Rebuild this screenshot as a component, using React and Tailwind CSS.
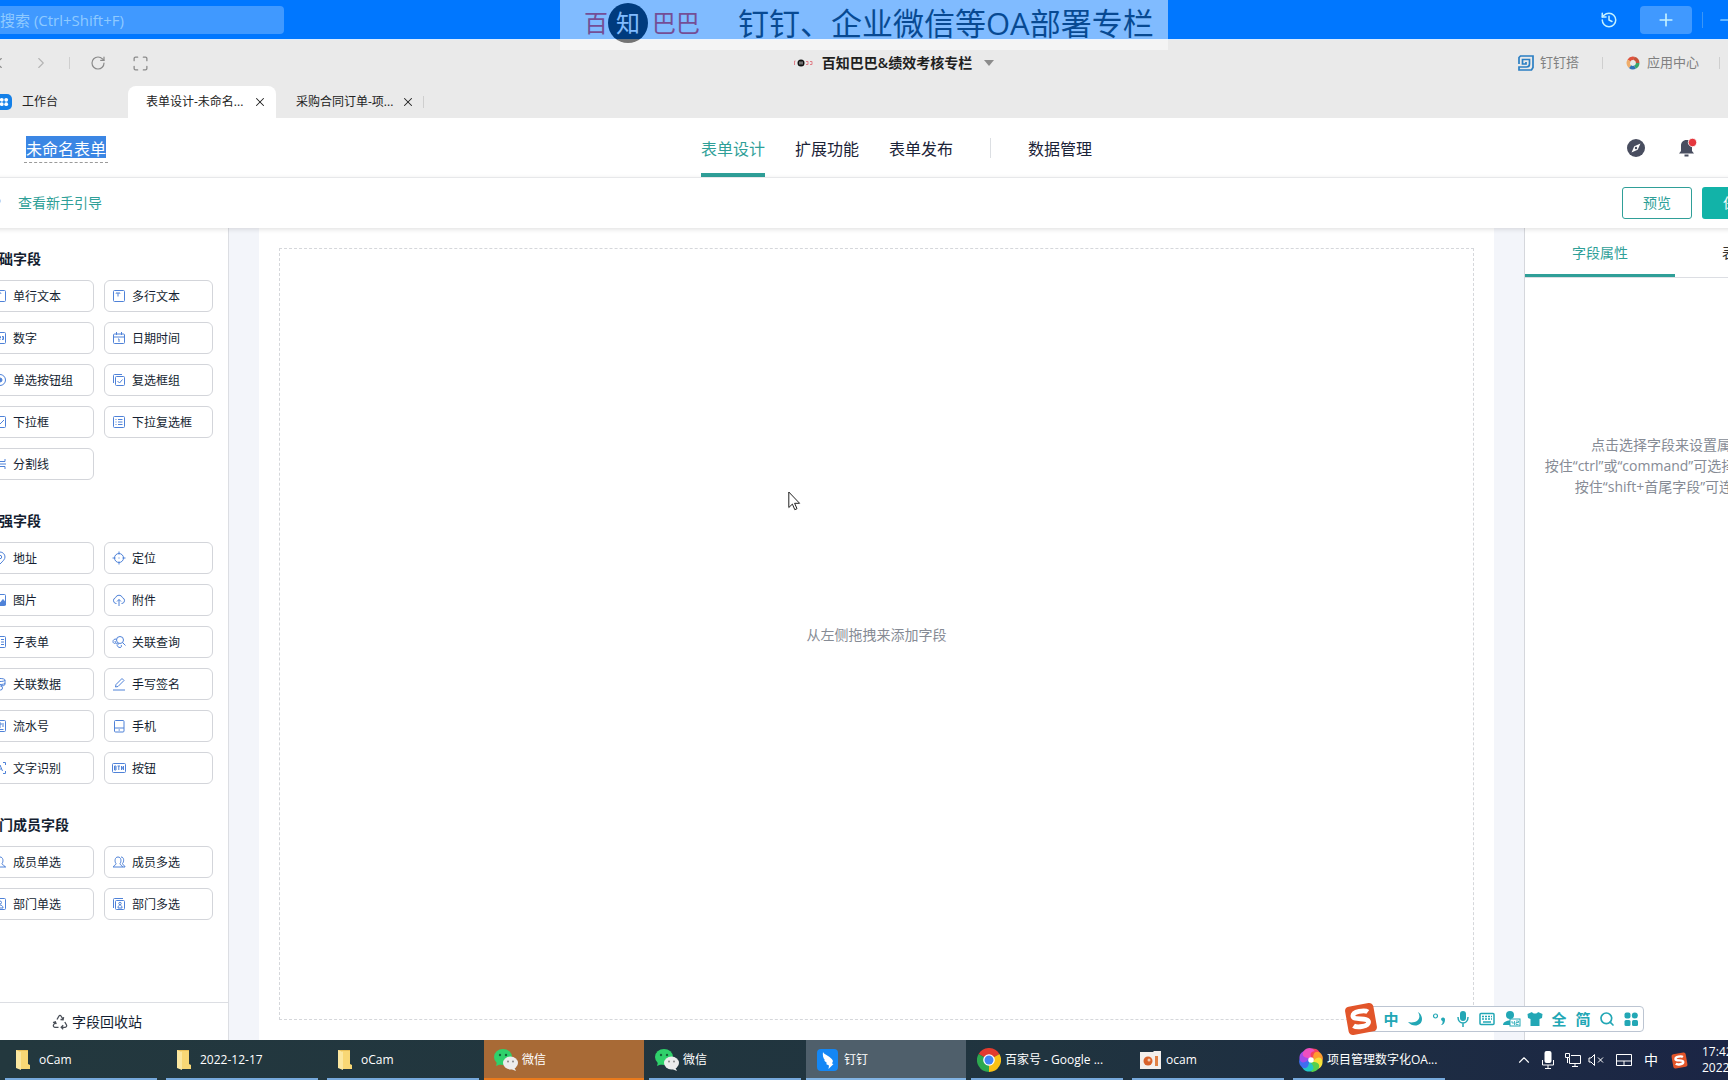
import { useState } from "react"
import {
  ChevronLeft,
  ChevronRight,
  ChevronUp,
  History,
  Maximize,
  Minus,
  Plus,
  RotateCw,
  Search,
  X,
} from "lucide-react"

const FIELD_ICONS = {
  text: (
    <>
      <rect x="1.5" y="1.5" width="11" height="11" rx="1" />
      <path d="M4 4.5V4h4v.5M6 4v3.5" />
    </>
  ),
  number: (
    <>
      <rect x="1.5" y="1.5" width="11" height="11" rx="1" />
      <path d="M4 5.5v3M6 5.5h1.5v1.5H6v1.5h1.5M9 5.5h1.5v3H9M9 7h1.5" />
    </>
  ),
  date: (
    <>
      <rect x="1.5" y="3" width="11" height="9.5" rx="1" />
      <path d="M1.5 6h11M4.5 1v3M9.5 1v3M6 8h1v3" />
    </>
  ),
  radio: (
    <>
      <circle cx="7" cy="7" r="5.5" />
      <circle cx="7" cy="7" r="2" fill="currentColor" />
    </>
  ),
  checkGroup: (
    <>
      <path d="M1.5 10V2.5a1 1 0 0 1 1-1H10" />
      <rect x="3.5" y="3.5" width="9" height="9" rx="1" />
      <path d="M5.5 8 7.5 10l3-3.5" />
    </>
  ),
  select: (
    <>
      <rect x="1.5" y="1.5" width="11" height="11" rx="1" />
      <path d="M4.5 6.5 7 9l4-4" />
    </>
  ),
  selectMulti: (
    <>
      <rect x="1.5" y="1.5" width="11" height="11" rx="1" />
      <path d="M3.5 4.5h1M6 4.5h4.5M3.5 7h1M6 7h4.5M3.5 9.5h1M6 9.5h4.5" />
    </>
  ),
  divider: <path d="M2 2v2.5h10V2M1 7h12M2 12V9.5h10V12" />,
  address: (
    <>
      <path d="M7 13C4 10 2 8.2 2 6a5 5 0 0 1 10 0c0 2.2-2 4-5 7Z" />
      <circle cx="7" cy="6" r="1.7" />
    </>
  ),
  locate: (
    <>
      <circle cx="7" cy="7" r="4.5" />
      <path d="M7 .5v3M7 10.5v3M.5 7h3M10.5 7h3M6.5 7h1" />
    </>
  ),
  image: (
    <>
      <rect x="1.5" y="1.5" width="11" height="11" rx="1" />
      <path d="m2 11 3-4 2.5 2.5L10 6.5l2.5 3V12H2Z" fill="currentColor" />
    </>
  ),
  attachment: (
    <path d="M4.5 10.5H4A3 3 0 0 1 3.5 4.7a3.7 3.7 0 0 1 7 0A3 3 0 0 1 10 10.5h-.5M7 13V6.5M5 8.5l2-2 2 2" />
  ),
  subform: (
    <>
      <rect x="1.5" y="1.5" width="11" height="11" rx="1" />
      <path d="M5.5 1.5v11M8 4.5h3M8 7h3M8 9.5h3" />
    </>
  ),
  linkQuery: (
    <>
      <circle cx="8" cy="5" r="3.5" />
      <path d="m10.5 7.5 3 3M4.5 4c-2.5 0-3.5 1-3.5 2.5S2 8.5 3.5 8.5M3 6c0 2 2 3 4 3M5 9.5c0 2 1.5 3 3 3s2-1.5 1-2.5" />
    </>
  ),
  linkData: (
    <>
      <path d="M2 3c0-2 10-2 10 0v4c0 2-3 2-4 1.5M2 3v6c0 1 1.5 1.500 3 1.500M2 3c0 2 10 2 10 0M2 6c0 2 10 2 10 0" />
      <circle cx="7.5" cy="11" r="2" />
    </>
  ),
  signature: <path d="M1 13h12M3.500 10l.5-2.500L10 1.500l2 2L6 9.500Z" />,
  serial: (
    <>
      <rect x="1.5" y="1.5" width="11" height="11" rx="1" />
      <path d="M3.5 10.5h7M4 4v4M6.500 4H8v2H6.500v2H8M10 4v4" />
    </>
  ),
  phone: (
    <>
      <rect x="2.5" y="1.5" width="9.5" height="11.5" rx="1" />
      <path d="M2.5 9H12M6.500 11H8" />
    </>
  ),
  ocr: (
    <path d="M1.5 4V1.5H4M10 1.5h2.5V4M12.5 10v2.5H10M4 12.5H1.5V10M4.500 10 7 4l2.500 6M5.500 8h3" />
  ),
  button: (
    <>
      <rect x="0.5" y="2.5" width="13" height="9" rx="1" />
      <path d="M2.500 5v4H4V5Zm0 2H4M5.500 5H8M6.800 5v4M9.500 9V5l2 4V5" />
    </>
  ),
  member: (
    <path d="M1 12h12M2 12c0-2 3-1.500 3-3.500C3.500 7 3.500 2 7 2s3.500 5 2 6.500c0 2 3 1.500 3 3.500" />
  ),
  members: (
    <path d="M1 12h10M1.500 12c0-2 2.500-1.500 2.500-3.500C2.500 7 2.500 2 6 2s3.500 5 2 6.500c0 2 2.500 1.500 2.500 3.500M9 2c3.500 0 3 5 1.500 6.500 0 2 2.500 1.500 2.500 3.500h-2" />
  ),
  dept: (
    <>
      <rect x="1.5" y="1.5" width="11" height="11" rx="1" />
      <circle cx="7" cy="5.5" r="1.5" />
      <path d="M4 11c0-4 6-4 6 0Z" />
    </>
  ),
  depts: (
    <>
      <path d="M1.5 11V2.5a1 1 0 0 1 1-1H11" />
      <rect x="3.5" y="3.5" width="9" height="9" rx="1" />
      <circle cx="8" cy="6.5" r="1.2" />
      <path d="M6 11c0-4 4-4 4 0Z" />
    </>
  ),
}

const FIELD_SECTIONS = [
  {
    title: "基础字段",
    fields: [
      { label: "单行文本", icon: "text" },
      { label: "多行文本", icon: "text" },
      { label: "数字", icon: "number" },
      { label: "日期时间", icon: "date" },
      { label: "单选按钮组", icon: "radio" },
      { label: "复选框组", icon: "checkGroup" },
      { label: "下拉框", icon: "select" },
      { label: "下拉复选框", icon: "selectMulti" },
      { label: "分割线", icon: "divider" },
    ],
  },
  {
    title: "增强字段",
    fields: [
      { label: "地址", icon: "address" },
      { label: "定位", icon: "locate" },
      { label: "图片", icon: "image" },
      { label: "附件", icon: "attachment" },
      { label: "子表单", icon: "subform" },
      { label: "关联查询", icon: "linkQuery" },
      { label: "关联数据", icon: "linkData" },
      { label: "手写签名", icon: "signature" },
      { label: "流水号", icon: "serial" },
      { label: "手机", icon: "phone" },
      { label: "文字识别", icon: "ocr" },
      { label: "按钮", icon: "button" },
    ],
  },
  {
    title: "部门成员字段",
    fields: [
      { label: "成员单选", icon: "member" },
      { label: "成员多选", icon: "members" },
      { label: "部门单选", icon: "dept" },
      { label: "部门多选", icon: "depts" },
    ],
  },
]

const FolderIcon = () => (
  <svg viewBox="0 0 24 24" className="h-6 w-6">
    <path d="M5 2h12v15h2v3H5Z" fill="#e9bf57" />
    <path d="M9 3h8v13l2 1v4H9Z" fill="#f8d775" />
    <path d="M5 2l5 2v18l-5-2Z" fill="#fbe7a0" />
  </svg>
)

const WechatIcon = () => (
  <svg viewBox="0 0 24 24" className="h-6 w-6">
    <ellipse cx="9" cy="9" rx="9" ry="8" fill="#2fd16b" />
    <path d="m3 14-1 4 5-2Z" fill="#2fd16b" />
    <circle cx="6" cy="7" r="1.2" fill="#14653a" />
    <circle cx="12" cy="7" r="1.2" fill="#14653a" />
    <ellipse cx="16.5" cy="15" rx="7.5" ry="6.5" fill="#ececec" />
    <path d="m20 19 2 4-5-2Z" fill="#ececec" />
    <circle cx="14" cy="13.5" r="1" fill="#888" />
    <circle cx="19" cy="13.5" r="1" fill="#888" />
  </svg>
)

const DingIcon = () => (
  <svg viewBox="0 0 24 24" className="h-6 w-6">
    <rect x="1" y="1" width="21" height="22" rx="4" fill="#1487f5" />
    <path
      d="M7 4c1 3 8 4 10 9l-1 2.500 1.500.5-5 5 .5-3.500-3-1.500 1-1-3-2.500 1-.3C7 10 6.500 7 7 4Z"
      fill="#fff"
    />
  </svg>
)

const ChromeIcon = () => (
  <svg viewBox="0 0 24 24" className="h-6 w-6">
    <path d="M12 12 1.600 6A12 12 0 0 1 22.400 6Z" fill="#e33b2e" />
    <path d="M12 12 22.400 6A12 12 0 0 1 12 24Z" fill="#fbc116" />
    <path d="M12 12 12 24A12 12 0 0 1 1.600 6Z" fill="#2da94f" />
    <circle cx="12" cy="12" r="5.8" fill="#fff" />
    <circle cx="12" cy="12" r="4.5" fill="#4285f4" />
  </svg>
)

const OcamIcon = () => (
  <svg viewBox="0 0 24 24" className="h-6 w-6">
    <path d="M2 4h13l1-1h7v18H2Z" fill="#f3efec" />
    <circle cx="10" cy="13" r="4.5" fill="#d9622b" />
    <circle cx="11" cy="12" r="1.5" fill="#f3c9b0" />
    <rect x="17" y="8" width="3" height="10" fill="#e08145" />
  </svg>
)

const PETALS = [
  "#f5445c",
  "#ff9b2f",
  "#f6e13a",
  "#57d04a",
  "#22c7c7",
  "#3f6df0",
  "#a14be8",
  "#ee4fc0",
]

const PinwheelIcon = () => (
  <svg viewBox="0 0 24 24" className="h-6 w-6">
    {PETALS.map((color, i) => (
      <path
        key={color}
        d="M12 9C9 6 8 2 13 .5c5-.5 9 3 8 8C19 6 15 6 14 11Z"
        fill={color}
        transform={`rotate(${i * 45} 12 12)`}
      />
    ))}
    <circle cx="12" cy="12" r="2.8" fill="#fff" />
  </svg>
)

const SogouIcon = ({ className }) => (
  <svg viewBox="0 0 32 32" className={className}>
    <g transform="rotate(-10 16 16)">
      <rect x="2.5" y="2.5" width="27" height="27" rx="4" fill="#e2552a" />
      <path
        d="M23.500 10.500C21 8 9.500 7.500 9 12c-.5 4.500 14 3 13.500 8-.5 4-11.500 4-14.500 1"
        fill="none"
        stroke="#fff"
        strokeWidth="4.5"
      />
    </g>
  </svg>
)

const RecycleIcon = () => (
  <svg
    viewBox="0 0 16 16"
    className="h-4 w-4"
    fill="none"
    stroke="#4a4f58"
    strokeWidth="1.3"
  >
    <path d="M5 5.500 7 2c.5-.8 1.500-.8 2 0l1.800 3M8.500 5.500l2.600.2.500-2.600" />
    <path d="m12.800 8 1.700 3c.5 1-.2 2.300-1.300 2.300H9.500M11.200 11.300l-2 2 2 2" />
    <path d="M6.500 13.300H2.800c-1.100 0-1.800-1.300-1.300-2.300l1.800-3M1 8.500l2.400-.8.8 2.400" />
  </svg>
)

const TASKS = [
  { label: "oCam", Icon: FolderIcon },
  { label: "2022-12-17", Icon: FolderIcon },
  { label: "oCam", Icon: FolderIcon },
  { label: "微信", Icon: WechatIcon, state: "alert" },
  { label: "微信", Icon: WechatIcon },
  { label: "钉钉", Icon: DingIcon, state: "active" },
  { label: "百家号 - Google ...", Icon: ChromeIcon },
  { label: "ocam", Icon: OcamIcon },
  { label: "项目管理数字化OA...", Icon: PinwheelIcon },
]

const TitleBar = () => (
  <div className="flex h-10 shrink-0 items-center border-b border-[#dcecff] bg-[#0077ff]">
    <input
      type="search"
      aria-label="搜索"
      placeholder="搜索 (Ctrl+Shift+F)"
      className="h-7 w-[314px] rounded bg-[#4099ff] pl-[30px] text-[15px] text-white placeholder:text-[#8fcaff]"
    />
    <div className="ml-auto flex items-center pr-[90px] text-[#c4f1ff]">
      <button aria-label="历史" className="mr-[22px]">
        <History size={18} strokeWidth={2} />
      </button>
      <button
        aria-label="新建"
        className="flex h-7 w-[52px] items-center justify-center rounded bg-[#4099ff]"
      >
        <Plus size={20} />
      </button>
      <span className="ml-[10px] h-4 w-px bg-[#3c96f5]" />
      <button aria-label="最小化" className="ml-[14px]">
        <Minus size={18} strokeWidth={1.5} />
      </button>
    </div>
  </div>
)

const NavBar = () => (
  <div className="grid h-[46px] shrink-0 grid-cols-[1fr_auto_1fr] items-center">
    <div className="flex items-center pl-5 text-[#8a8a8a]">
      <button aria-label="后退">
        <ChevronLeft size={18} strokeWidth={1.5} />
      </button>
      <button aria-label="前进" className="ml-6 text-[#b4b4b4]">
        <ChevronRight size={18} strokeWidth={1.5} />
      </button>
      <span className="ml-[19px] h-3 w-px bg-[#cfcfcf]" />
      <button aria-label="刷新" className="ml-5">
        <RotateCw size={16} strokeWidth={1.8} />
      </button>
      <button aria-label="全屏" className="ml-[26px]">
        <Maximize size={17} strokeWidth={1.8} />
      </button>
    </div>
    <button className="flex items-center pr-2 text-sm font-semibold text-[#1f1f1f]">
      <svg viewBox="0 0 20 10" className="mr-[9px] h-[10px] w-5">
        <circle cx="8" cy="5" r="3.5" fill="#111" />
        <path d="M7 3.500v3M9 3.500v3" stroke="#fff" strokeWidth="0.8" />
        <path
          d="M2.500 3h-1v4M13 3.500h2v3h-2M17 3.500h2v3h-2"
          fill="none"
          stroke="#e07f88"
        />
      </svg>
      百知巴巴&绩效考核专栏
      <svg viewBox="0 0 10 6" className="ml-3 h-[6px] w-[10px]">
        <path d="M0 0h10L5 6Z" fill="#8c8c8c" />
      </svg>
    </button>
    <div className="flex items-center justify-end pr-[105px] text-[13px] text-[#808080]">
      <button className="flex items-center gap-[6px]">
        <svg
          viewBox="0 0 16 16"
          className="h-4 w-4"
          fill="none"
          stroke="#2b7fc3"
          strokeWidth="1.7"
        >
          <path d="M1 9V2.500L2.500 1H15v11.500L13.500 15H1v-3h7.500c2 0 3-1.500 3-3V4.500H4.500V9H8V7" />
        </svg>
        钉钉搭
      </button>
      <span className="mx-[23px] h-3 w-px bg-[#cfcfcf]" />
      <button className="flex items-center gap-[7px]">
        <svg
          viewBox="0 0 14 14"
          className="h-[14px] w-[14px]"
          fill="none"
          strokeWidth="3.5"
        >
          <path d="M3 4.500A4.700 4.700 0 0 1 8 2.400" stroke="#e0533d" />
          <path d="M8 2.400A4.700 4.700 0 0 1 11.700 7" stroke="#c4543a" />
          <path d="M11.700 7A4.700 4.700 0 0 1 9 11.200" stroke="#3aa66b" />
          <path d="M9 11.200A4.700 4.700 0 0 1 4 10.600" stroke="#2f74b8" />
          <path d="M4 10.600A4.700 4.700 0 0 1 3 4.500" stroke="#efad6a" />
        </svg>
        应用中心
      </button>
      <span className="ml-5 h-3 w-px bg-[#cfcfcf]" />
    </div>
  </div>
)

const PageTabs = () => (
  <div className="flex h-8 shrink-0 items-center text-xs text-[#222]">
    <button className="flex w-[158px] items-center gap-[10px] pl-[26px]">
      <svg viewBox="0 0 16 16" className="h-4 w-4">
        <rect width="16" height="16" rx="5" fill="#1480e8" />
        <g fill="#fff">
          <circle cx="5.8" cy="5.8" r="1.9" />
          <circle cx="10.2" cy="5.8" r="1.9" />
          <circle cx="5.8" cy="10.2" r="1.9" />
          <circle cx="10.2" cy="10.2" r="1.9" />
        </g>
      </svg>
      工作台
    </button>
    <div className="flex h-8 w-[148px] items-center justify-between rounded-t-lg bg-white pr-[9px] pl-[18px]">
      <button>表单设计-未命名...</button>
      <button aria-label="关闭标签">
        <X size={14} strokeWidth={1.8} />
      </button>
    </div>
    <div className="ml-5 flex items-center gap-2">
      <button>采购合同订单-项...</button>
      <button aria-label="关闭标签">
        <X size={14} strokeWidth={1.8} />
      </button>
    </div>
    <span className="ml-2 h-3 w-px bg-[#cfcfcf]" />
  </div>
)

const NAV_TABS = ["表单设计", "扩展功能", "表单发布"]

const FormHeader = () => {
  const [formName, setFormName] = useState("未命名表单")
  const [activeTab, setActiveTab] = useState(NAV_TABS[0])

  return (
    <div className="grid h-[60px] shrink-0 grid-cols-[1fr_auto_1fr] items-center border-b border-[#f1f2f4] bg-white">
      <div className="pl-[54px]">
        <div className="inline-block border-b border-dashed border-[#9a9a9a] px-[2px] pt-1 pb-1">
          <input
            aria-label="表单名称"
            value={formName}
            onChange={(event) => setFormName(event.target.value)}
            className="block h-[22px] w-20 bg-[#3b86e4] pt-px text-base leading-[21px] text-white"
          />
        </div>
      </div>
      <nav className="flex h-[59px] pr-[2px] text-base text-[#1b2338]">
        <div className="flex gap-[30px]">
          {NAV_TABS.map((tab) => (
            <button
              key={tab}
              onClick={() => setActiveTab(tab)}
              className={
                tab === activeTab
                  ? "border-b-4 border-[#2f9f98] pt-[6px] text-[#2f9f98]"
                  : "border-b-4 border-transparent pt-[6px]"
              }
            >
              {tab}
            </button>
          ))}
        </div>
        <span className="mx-[37px] h-5 w-px self-center bg-[#dcdfe3]" />
        <button className="pt-[2px]">数据管理</button>
      </nav>
      <div className="flex items-center justify-end pr-[72px]">
        <button aria-label="发现">
          <svg viewBox="0 0 18 18" className="h-[18px] w-[18px]">
            <circle cx="9" cy="9" r="9" fill="#484d5f" />
            <path d="m13.500 4.500-2.800 6.200-6.200 2.800 2.800-6.200Z" fill="#fff" />
            <circle cx="9" cy="9" r="1.2" fill="#484d5f" />
          </svg>
        </button>
        <button aria-label="通知" className="ml-[33px]">
          <svg viewBox="0 0 20 20" className="h-5 w-5">
            <path
              d="M8.500 2c3.500 0 5.500 2.500 5.500 5.500v5.500l2 2.500H1l2-2.500V7.500C3 4.500 5 2 8.500 2ZM6.500 16.500h4v2h-4Z"
              fill="#484d5f"
            />
            <circle
              cx="14.5"
              cy="4.5"
              r="4.2"
              fill="#e5373e"
              stroke="#fff"
              strokeWidth="0.8"
            />
          </svg>
        </button>
        <span className="ml-[31px] h-6 w-6 rounded-full bg-[#b59a3c]" />
      </div>
    </div>
  )
}

const ActionBar = () => (
  <div className="relative z-10 flex h-[50px] shrink-0 items-center justify-between bg-white pr-[53px] shadow-[0_1px_5px_rgba(0,0,0,0.14)]">
    <a
      href="#guide"
      className="flex items-center gap-4 pl-[18px] text-sm text-[#2f9f98]"
    >
      <svg
        viewBox="0 0 14 14"
        className="h-[14px] w-[14px]"
        fill="none"
        stroke="#4a8fe0"
        strokeWidth="1.8"
      >
        <circle cx="7" cy="5" r="4.5" />
      </svg>
      查看新手引导
    </a>
    <div className="flex gap-[10px] text-sm">
      <button className="h-8 w-[70px] rounded-[3px] border border-[#2f9f98] text-[#2f9f98]">
        预览
      </button>
      <button className="h-8 w-[70px] rounded-[3px] bg-[#12b3a8] text-white">
        保存
      </button>
    </div>
  </div>
)

const FieldPanel = () => (
  <aside className="flex w-[259px] shrink-0 flex-col border-r border-[#dcdee3] bg-white">
    <div className="flex min-h-0 flex-1 flex-col gap-[30px] overflow-hidden px-[15px] pt-5">
      {FIELD_SECTIONS.map((section) => (
        <section key={section.title}>
          <h3 className="mb-[10px] text-sm leading-[22px] font-semibold text-[#141e31]">
            {section.title}
          </h3>
          <div className="grid grid-cols-2 gap-[10px]">
            {section.fields.map((field) => (
              <button
                key={field.label}
                className="flex h-8 items-center gap-[6px] rounded-md border border-[#d3d5da] pt-[2px] pl-[7px] text-xs text-[#141e31]"
              >
                <svg
                  viewBox="0 0 14 14"
                  className="mb-[2px] h-[14px] w-[14px] text-[#4f82d8]"
                  fill="none"
                  stroke="currentColor"
                >
                  {FIELD_ICONS[field.icon]}
                </svg>
                {field.label}
              </button>
            ))}
          </div>
        </section>
      ))}
    </div>
    <button className="flex h-[38px] items-center justify-center gap-1 border-t border-[#dcdee3] pr-1 text-sm text-[#141e31]">
      <RecycleIcon />
      字段回收站
    </button>
  </aside>
)

const PropertyPanel = () => (
  <aside className="w-[301px] shrink-0 border-l border-[#d5d7dc] bg-white">
    <div className="flex h-[50px] border-b border-[#dcdee3] text-sm">
      <button className="h-[49px] w-[150px] border-b-[3px] border-[#2f9f98] pt-1 text-[#2f9f98]">
        字段属性
      </button>
      <button className="h-[49px] w-[150px] pt-px text-[#333]">表单属性</button>
    </div>
    <p className="mt-[156px] text-center text-sm leading-[21px] whitespace-nowrap text-[#868b95]">
      点击选择字段来设置属性，
      <br />
      按住“ctrl”或“command”可选择多个字段，
      <br />
      按住“shift+首尾字段”可连续选择
    </p>
  </aside>
)

const Watermark = () => (
  <div className="absolute top-0 left-1/2 z-20 flex h-[50px] w-[608px] -translate-x-1/2 items-center bg-white pb-1 pl-6 opacity-50">
    <span className="text-2xl leading-8 text-[#e8262e]">百</span>
    <span className="flex h-10 w-10 items-center justify-center rounded-full bg-black text-2xl text-white">
      知
    </span>
    <span className="ml-1 text-2xl leading-8 text-[#e8262e]">巴巴</span>
    <span className="ml-[38px] text-[31px] leading-10 whitespace-nowrap text-[#101c28]">
      钉钉、企业微信等OA部署专栏
    </span>
  </div>
)

const ImeBar = () => (
  <div className="absolute right-[84px] bottom-[44px] z-20 flex h-[34px] items-center">
    <SogouIcon className="relative z-10 -mr-[18px] h-[34px] w-[34px]" />
    <div className="flex h-[26px] items-center rounded-sm border border-[#bcc5d2] bg-white pl-[18px] text-[15px] font-bold text-[#22a7b5]">
      <span className="w-6 text-center">中</span>
      <svg viewBox="0 0 24 16" className="h-4 w-6" fill="currentColor">
        <path d="M15 1c4 6-1 12-10 10 5 6 14 4 14-3 0-3-2-6-4-7Z" />
      </svg>
      <svg viewBox="0 0 24 16" className="h-4 w-6" fill="currentColor">
        <circle
          cx="8.5"
          cy="5"
          r="2"
          fill="none"
          stroke="currentColor"
          strokeWidth="1.2"
        />
        <path d="M14 8a2 2 0 1 1 4 1c0 3-2 5-4 5 1-1 2-2 1.500-4A2 2 0 0 1 14 8Z" />
      </svg>
      <svg
        viewBox="0 0 24 16"
        className="h-4 w-6"
        fill="none"
        stroke="currentColor"
        strokeWidth="1.5"
      >
        <rect
          x="9"
          y="0"
          width="6"
          height="10"
          rx="3"
          fill="currentColor"
          stroke="none"
        />
        <path d="M7 6c0 8 10 8 10 0M12 12v4" />
      </svg>
      <svg
        viewBox="0 0 24 16"
        className="h-4 w-6"
        fill="none"
        stroke="currentColor"
        strokeWidth="1.5"
      >
        <rect x="5" y="2.5" width="14" height="11" rx="1" />
        <path d="M7 5.500h10M7 8h10" strokeDasharray="2 1" />
        <path d="M8 11h8" />
      </svg>
      <svg viewBox="0 0 24 16" className="h-4 w-6">
        <circle cx="11" cy="4" r="4" fill="currentColor" />
        <path d="M4 14c0-6 14-6 14 0Z" fill="currentColor" />
        <rect
          x="11"
          y="8"
          width="10"
          height="7"
          fill="#fff"
          stroke="currentColor"
        />
        <path
          d="M13 10v2h2M15.500 10v4M17 10h2.500v1.500H17V13.500h2.500"
          fill="none"
          stroke="currentColor"
          strokeWidth="0.8"
        />
      </svg>
      <svg viewBox="0 0 24 16" className="h-4 w-6" fill="currentColor">
        <path d="M4.500 3 9 1c1 2 5 2 6 0l4.500 2-.5 4-2.500 1v7h-9V8L5 7Z" />
      </svg>
      <span className="w-6 text-center">全</span>
      <span className="w-6 text-center">简</span>
      <span className="flex w-6 justify-center">
        <Search size={16} strokeWidth={2.5} />
      </span>
      <svg viewBox="0 0 24 16" className="h-4 w-6" fill="currentColor">
        <rect x="5.5" y="1.5" width="6" height="6" rx="2" />
        <circle cx="15.8" cy="4.5" r="3" />
        <rect x="5.5" y="9" width="6" height="6" rx="1.5" />
        <rect x="13" y="9" width="6" height="6" rx="1.5" />
      </svg>
    </div>
  </div>
)

const TASK_STATE_CLASSES = {
  alert: "bg-[#a86a36]",
  active: "bg-[#4f5f6b]",
}

const TASK_LINE_CLASSES = {
  alert: "bg-[#ea7a1c]",
  active: "bg-[#82b4e4]",
}

const Taskbar = () => (
  <footer className="flex h-10 shrink-0 gap-px overflow-hidden bg-linear-to-r from-[#23383e] via-[#20343f] via-60% to-[#1b2545] pl-px text-xs text-white">
    {TASKS.map(({ label, Icon, state }, index) => (
      <button
        key={index}
        className={`flex w-40 shrink-0 flex-col ${TASK_STATE_CLASSES[state] ?? ""}`}
      >
        <span className="flex flex-1 items-center gap-1 pt-[2px] pl-[10px] whitespace-nowrap">
          <Icon />
          {label}
        </span>
        <span
          className={`h-[2px] self-stretch ${state ? "" : "mx-1"} ${TASK_LINE_CLASSES[state] ?? "bg-[#76a9dc]"}`}
        />
      </button>
    ))}
    <div className="ml-auto flex shrink-0 items-center">
      <ChevronUp size={18} strokeWidth={1.5} />
      <svg viewBox="0 0 12 18" className="ml-[9px] h-[18px] w-3">
        <rect x="2.5" y="0" width="7" height="12" rx="2" fill="#fff" />
        <path
          d="M.5 9v5h11V9M6 14v3M3 17.500h6"
          fill="none"
          stroke="#fff"
        />
      </svg>
      <svg
        viewBox="0 0 16 16"
        className="ml-[11px] h-4 w-4"
        fill="none"
        stroke="#fff"
      >
        <path d="M6 3.500h9.500v8H4.500V6M7 14.500h6M10 11.500v3" />
        <path d="M.5 1.500h4v4h-4ZM2.500 5.500V11" />
      </svg>
      <svg
        viewBox="0 0 16 14"
        className="ml-[7px] h-[14px] w-4"
        fill="none"
        stroke="#fff"
      >
        <path d="M1 5h2l3.500-3.500v11L3 9H1ZM10 4.500l5 5M15 4.500l-5 5" />
      </svg>
      <svg
        viewBox="0 0 16 14"
        className="ml-3 h-[14px] w-4"
        fill="none"
        stroke="#fff"
      >
        <path d="M.5 1.500h15v11H.5ZM.5 8h15M8 8v4.500" />
      </svg>
      <span className="ml-3 text-sm">中</span>
      <SogouIcon className="ml-[13px] h-[17px] w-[17px]" />
      <time className="ml-[14px] w-[26px] leading-4 whitespace-nowrap">
        17:42
        <br />
        2022/12/17
      </time>
    </div>
  </footer>
)

const App = () => {
  return (
    <div className="relative flex h-screen flex-col overflow-hidden bg-white font-['Open_Sans','Noto_Sans_CJK_SC',sans-serif]">
      <main className="-mr-[97px] -ml-[30px] flex min-h-0 flex-1 flex-col bg-[#eaeaea]">
        <TitleBar />
        <NavBar />
        <PageTabs />
        <FormHeader />
        <ActionBar />
        <div className="flex min-h-0 flex-1">
          <FieldPanel />
          <div className="flex min-w-0 flex-1 bg-[#f3f5fa] px-[30px]">
            <div className="flex flex-1 bg-white p-5">
              <div className="flex flex-1 items-center justify-center border border-dashed border-[#d5d7db] pt-[2px] text-sm text-[#868b95]">
                从左侧拖拽来添加字段
              </div>
            </div>
          </div>
          <PropertyPanel />
        </div>
      </main>
      <Taskbar />
      <Watermark />
      <ImeBar />
      <svg
        viewBox="0 0 13 20"
        className="absolute top-[491px] left-[788px] z-20 h-5 w-[13px]"
      >
        <path
          d="M.8 1v15.500l3.600-3.400 2.400 5.600 2.200-1-2.400-5.400h5Z"
          fill="#fff"
          stroke="#222"
        />
      </svg>
    </div>
  )
}

export default App
